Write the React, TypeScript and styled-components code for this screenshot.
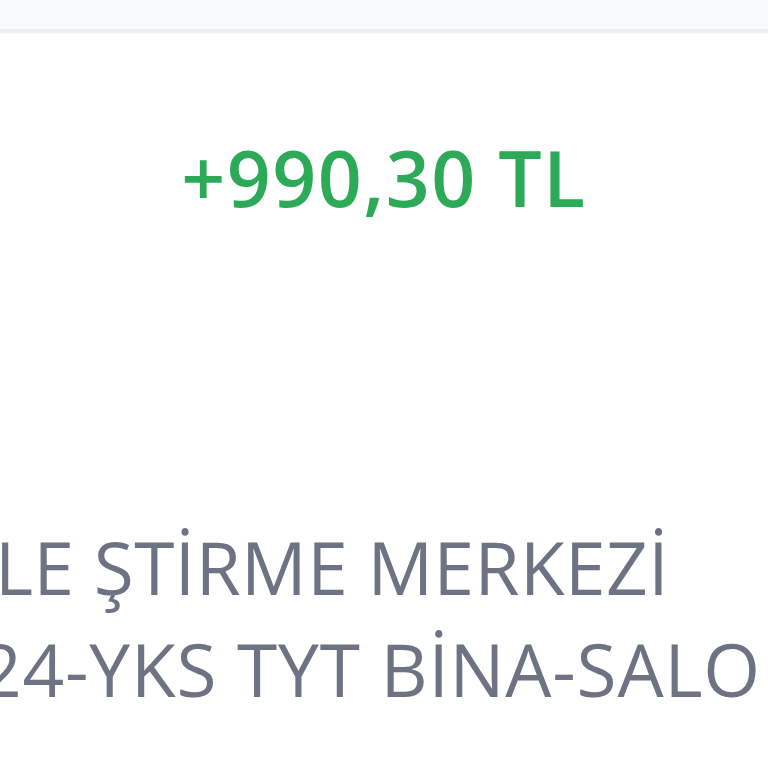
import styled, { createGlobalStyle } from 'styled-components';

const GlobalStyle = createGlobalStyle`
  html, body {
    margin: 0;
    padding: 0;
    background: #ffffff;
    font-family: "Open Sans", "Noto Sans", sans-serif;
  }
`;

const Page = styled.div`
  width: 768px;
  height: 768px;
  overflow: hidden;
  background: #ffffff;
  display: flex;
  flex-direction: column;
`;

const TopBar = styled.div`
  height: 29px;
  background: #f9fafc;
  border-bottom: 4px solid #eceef2;
  box-shadow: 0 1px 2px rgba(40, 50, 80, 0.04);
  flex-shrink: 0;
`;

const Card = styled.div`
  display: flex;
  flex-direction: column;
  padding-top: 92px;
`;

const Amount = styled.div`
  text-align: center;
  color: #2daa58;
  font-size: 77px;
  font-weight: 600;
  line-height: 105px;
  letter-spacing: 1.5px;
`;

const Description = styled.div`
  margin-top: 286px;
  display: flex;
  flex-direction: column;
  white-space: nowrap;
  overflow: hidden;
`;

const DescLine = styled.div<{ $shift: number; $spacing: number }>`
  color: #6e7383;
  font-size: 73px;
  font-weight: 400;
  line-height: 102px;
  letter-spacing: ${({ $spacing }) => $spacing}px;
  margin-left: ${({ $shift }) => $shift}px;
`;

export default function App() {
  return (
    <>
      <GlobalStyle />
      <Page>
        <TopBar />
        <Card>
          <Amount>+990,30 TL</Amount>
          <Description>
            <DescLine $shift={-5} $spacing={0.4}>LE ŞTİRME MERKEZİ</DescLine>
            <DescLine $shift={-20} $spacing={0.8}>24-YKS TYT BİNA-SALON</DescLine>
          </Description>
        </Card>
      </Page>
    </>
  );
}
